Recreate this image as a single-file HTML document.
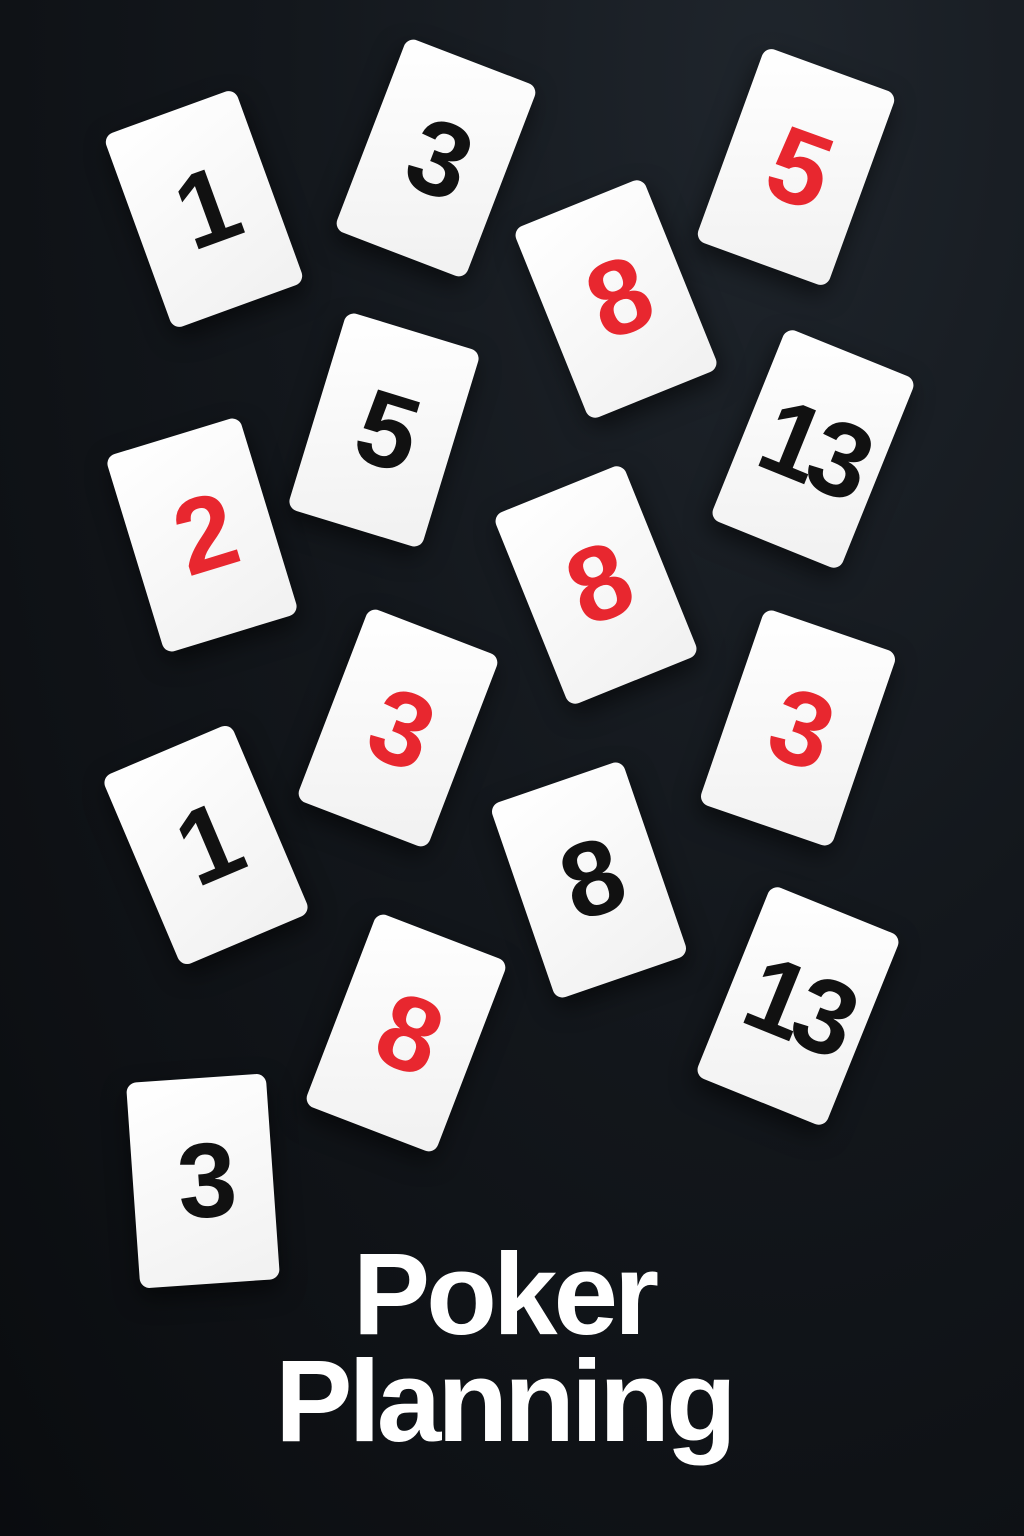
<!DOCTYPE html>
<html><head><meta charset="utf-8"><style>
html,body{margin:0;padding:0}
body{width:1024px;height:1536px;overflow:hidden;position:relative;
background:radial-gradient(ellipse at 75% 5%,#1f252c 0%,#13171c 45%,#0a0c0f 100%);
font-family:"Liberation Sans",sans-serif}
.c{position:absolute;width:140px;height:206px;margin:-103px 0 0 -70px;background:linear-gradient(160deg,#fff,#f1f1f1);
border-radius:10px;box-shadow:0 10px 24px rgba(0,0,0,.55);display:flex;align-items:center;justify-content:center;
font-weight:bold;font-size:106px;color:#111;letter-spacing:-8px}
.r{color:#e8272f}
.t{position:absolute;left:-8px;width:1024px;text-align:center;color:#fff;font-weight:bold;font-size:116px;letter-spacing:-4px;line-height:1}
</style></head><body>
<div class="c" style="left:204px;top:209px;transform:rotate(-20deg)">1</div>
<div class="c" style="left:436px;top:158px;transform:rotate(21deg)">3</div>
<div class="c r" style="left:796px;top:167px;transform:rotate(20deg)">5</div>
<div class="c r" style="left:616px;top:299px;transform:rotate(-22deg)">8</div>
<div class="c" style="left:384px;top:430px;transform:rotate(17deg)">5</div>
<div class="c" style="left:813px;top:449px;transform:rotate(22deg)">13</div>
<div class="c r" style="left:202px;top:535px;transform:rotate(-17deg)">2</div>
<div class="c r" style="left:596px;top:585px;transform:rotate(-22deg)">8</div>
<div class="c r" style="left:398px;top:728px;transform:rotate(21deg)">3</div>
<div class="c r" style="left:798px;top:728px;transform:rotate(19deg)">3</div>
<div class="c" style="left:206px;top:845px;transform:rotate(-23deg)">1</div>
<div class="c" style="left:589px;top:880px;transform:rotate(-19deg)">8</div>
<div class="c" style="left:798px;top:1006px;transform:rotate(22deg)">13</div>
<div class="c r" style="left:406px;top:1033px;transform:rotate(21deg)">8</div>
<div class="c" style="left:203px;top:1181px;transform:rotate(-4deg)">3</div>
<div class="t" style="top:1236px">Poker</div>
<div class="t" style="top:1343px">Planning</div>
</body></html>
